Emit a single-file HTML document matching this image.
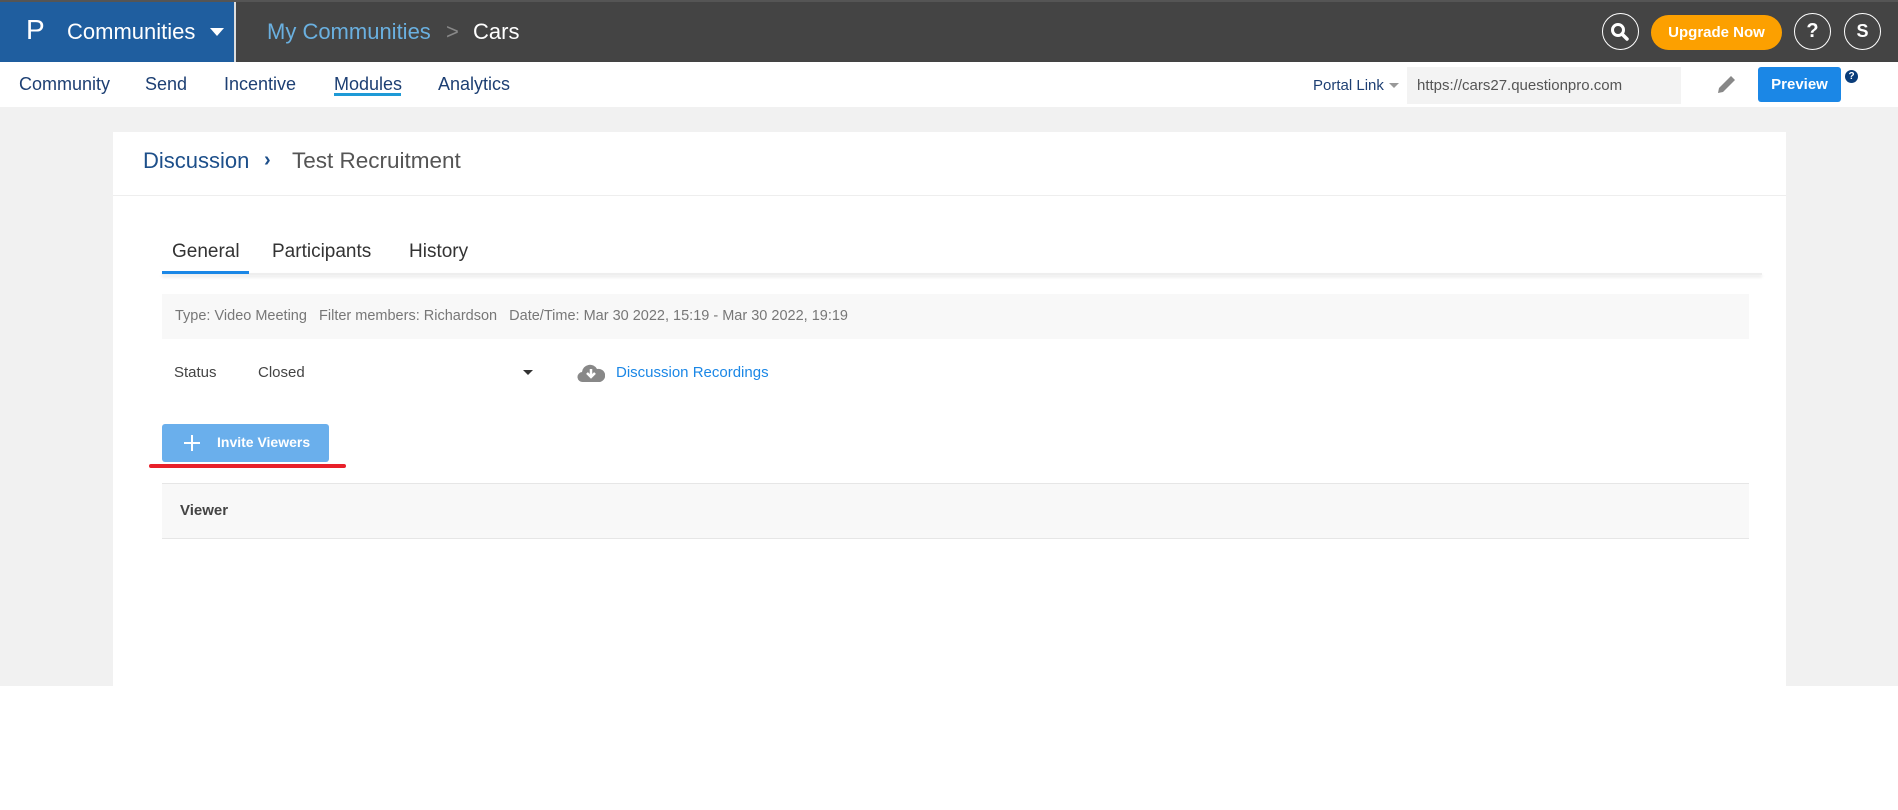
<!DOCTYPE html>
<html><head><meta charset="utf-8"><style>
*{box-sizing:border-box;margin:0;padding:0}
body{width:1898px;height:810px;background:#fff;font-family:"Liberation Sans",sans-serif;position:relative;overflow:hidden}
.a{position:absolute;white-space:nowrap}
</style></head><body>
<div class="a" style="left:0;top:0;width:1898px;height:62px;background:#444;border-top:2px solid #555"></div>
<div class="a" style="left:0;top:2px;width:234px;height:60px;background:#1f5e9f"></div>
<div class="a" style="left:234px;top:2px;width:2px;height:60px;background:#ddd"></div>
<div class="a" style="left:26px;top:14px;color:#fff;font-size:28px">P</div>
<div class="a" style="left:67px;top:19px;color:#fff;font-size:22px">Communities</div>
<div class="a" style="left:210px;top:28px;width:0;height:0;border-left:7px solid transparent;border-right:7px solid transparent;border-top:8px solid #fff"></div>
<div class="a" style="left:267px;top:19px;color:#6ab0e0;font-size:22px">My Communities</div>
<div class="a" style="left:446px;top:19px;color:#888;font-size:22px">&gt;</div>
<div class="a" style="left:473px;top:19px;color:#fff;font-size:22px">Cars</div>
<div class="a" style="left:1602px;top:13px;width:37px;height:37px;border:1.5px solid #fff;border-radius:50%"></div>
<svg class="a" style="left:1609px;top:21px" width="22" height="22" viewBox="0 0 22 22"><circle cx="9" cy="9" r="5.5" stroke="#fff" stroke-width="3" fill="none"/><path d="M13 13l5 5" stroke="#fff" stroke-width="3.5" stroke-linecap="round"/></svg>
<div class="a" style="left:1651px;top:15px;width:131px;height:35px;background:#fca000;border-radius:18px;color:#fff;font-size:15px;font-weight:bold;text-align:center;line-height:35px">Upgrade Now</div>
<div class="a" style="left:1794px;top:13px;width:37px;height:37px;border:1.5px solid #fff;border-radius:50%;color:#fff;font-weight:bold;font-size:20px;text-align:center;line-height:34px">?</div>
<div class="a" style="left:1844px;top:13px;width:37px;height:37px;border:1.5px solid #fff;border-radius:50%;color:#fff;font-weight:bold;font-size:18px;text-align:center;line-height:34px">S</div>

<div class="a" style="left:0;top:62px;width:1898px;height:45px;background:#fff;box-shadow:0 2px 3px rgba(0,0,0,.15)"></div>
<div class="a" style="left:19px;top:74px;color:#1d3f73;font-size:18px">Community</div>
<div class="a" style="left:145px;top:74px;color:#1d3f73;font-size:18px">Send</div>
<div class="a" style="left:224px;top:74px;color:#1d3f73;font-size:18px">Incentive</div>
<div class="a" style="left:334px;top:74px;color:#1d3f73;font-size:18px">Modules</div>
<div class="a" style="left:334px;top:93px;width:67px;height:3px;background:#1e9ad6"></div>
<div class="a" style="left:438px;top:74px;color:#1d3f73;font-size:18px">Analytics</div>
<div class="a" style="left:1313px;top:77px;color:#1d3f73;font-size:15px">Portal Link</div>
<div class="a" style="left:1389px;top:83px;border-left:5px solid transparent;border-right:5px solid transparent;border-top:5px solid #999"></div>
<div class="a" style="left:1407px;top:67px;width:274px;height:37px;background:#f3f3f3;color:#555;font-size:15px;line-height:37px;padding-left:10px">https://cars27.questionpro.com</div>
<svg class="a" style="left:1715px;top:72px" width="24" height="24" viewBox="0 0 24 24"><path d="M3 21l1-5L16 4l4 4L8 20z" fill="#888"/></svg>
<div class="a" style="left:1758px;top:67px;width:83px;height:35px;background:#1b87e6;border-radius:3px;color:#fff;font-size:15px;font-weight:bold;text-align:center;line-height:35px">Preview</div>
<div class="a" style="left:1845px;top:70px;width:13px;height:13px;background:#0a3d7a;border-radius:50%;color:#fff;font-size:10px;font-weight:bold;text-align:center;line-height:13px">?</div>

<div class="a" style="left:0;top:107px;width:1898px;height:579px;background:#f1f1f1"></div>
<div class="a" style="left:113px;top:132px;width:1673px;height:554px;background:#fff"></div>
<div class="a" style="left:113px;top:195px;width:1673px;height:1px;background:#eee"></div>
<div class="a" style="left:143px;top:148px;color:#1d4f8a;font-size:22px">Discussion</div>
<div class="a" style="left:264px;top:149px;color:#1d4f8a;font-size:20px;font-weight:bold">›</div>
<div class="a" style="left:292px;top:148px;color:#555;font-size:22.5px">Test Recruitment</div>

<div class="a" style="left:172px;top:241px;color:#333;font-size:19px">General</div>
<div class="a" style="left:272px;top:241px;color:#333;font-size:19px">Participants</div>
<div class="a" style="left:409px;top:241px;color:#333;font-size:19px">History</div>
<div class="a" style="left:162px;top:273px;width:1600px;height:2px;background:#eee;box-shadow:0 2px 3px rgba(0,0,0,.12)"></div>
<div class="a" style="left:162px;top:271px;width:87px;height:3px;background:#1b87e6"></div>

<div class="a" style="left:162px;top:294px;width:1587px;height:45px;background:#f8f8f8;color:#777;font-size:14.5px;line-height:45px;padding-left:13px">Type: Video Meeting &nbsp;&nbsp;Filter members: Richardson &nbsp;&nbsp;Date/Time: Mar 30 2022, 15:19 - Mar 30 2022, 19:19</div>
<div class="a" style="left:174px;top:364px;color:#444;font-size:15px">Status</div>
<div class="a" style="left:258px;top:364px;color:#444;font-size:15px">Closed</div>
<div class="a" style="left:523px;top:370px;border-left:5px solid transparent;border-right:5px solid transparent;border-top:5px solid #333"></div>
<svg class="a" style="left:577px;top:360px" width="28" height="24" viewBox="0 0 28 24"><path d="M6 22a5 5 0 0 1-1-10 8 8 0 0 1 15-3 6 6 0 0 1 3 13z" fill="#888"/><path d="M14 9v8M10 13l4 4 4-4" stroke="#fff" stroke-width="2.5" fill="none"/></svg>
<div class="a" style="left:616px;top:364px;color:#1b87e6;font-size:15px">Discussion Recordings</div>

<div class="a" style="left:162px;top:424px;width:167px;height:38px;background:#6aafec;border-radius:3px"></div>
<div class="a" style="left:184px;top:442px;width:16px;height:2px;background:#fff"></div>
<div class="a" style="left:191px;top:435px;width:2px;height:16px;background:#fff"></div>
<div class="a" style="left:217px;top:434px;color:#fff;font-size:14px;font-weight:bold">Invite Viewers</div>
<div class="a" style="left:149px;top:464px;width:197px;height:4px;background:#e8202a;border-radius:2px"></div>

<div class="a" style="left:162px;top:483px;width:1587px;height:56px;background:#f8f8f8;border-top:1px solid #e6e6e6;border-bottom:1px solid #e6e6e6"></div>
<div class="a" style="left:180px;top:502px;color:#444;font-size:15px;font-weight:bold">Viewer</div>
</body></html>
